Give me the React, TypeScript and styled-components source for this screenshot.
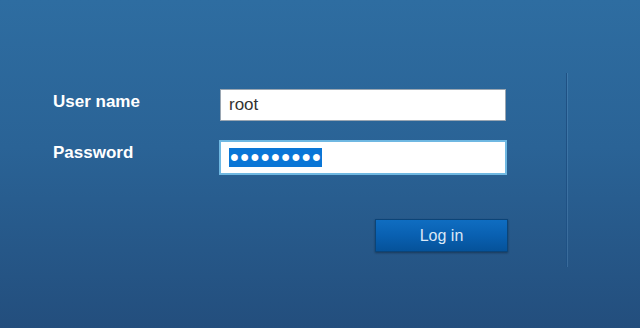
import React from 'react';
import styled, { createGlobalStyle } from 'styled-components';

const GlobalStyle = createGlobalStyle`
  html, body {
    margin: 0;
    padding: 0;
    width: 640px;
    height: 328px;
    overflow: hidden;
  }
  body {
    font-family: "Liberation Sans", Arial, sans-serif;
  }
`;

const App: React.FC = () => {
  return (
    <>
      <GlobalStyle />
      <Page>
        <FormArea>
          <Grid>
            <Label>User name</Label>
            <TextBox>root</TextBox>
            <Label>Password</Label>
            <TextBox focused>
              <Selected>•••••••••</Selected>
            </TextBox>
          </Grid>
          <ButtonRow>
            <LoginButton type="button">Log in</LoginButton>
          </ButtonRow>
        </FormArea>
        <Divider />
      </Page>
    </>
  );
};

export default App;

const Page = styled.div`
  display: flex;
  width: 640px;
  height: 328px;
  background: linear-gradient(to bottom, #2e6da1 0%, #2a6396 45%, #234e7d 100%);
  box-sizing: border-box;
`;

const FormArea = styled.div`
  width: 566px;
  padding: 89px 0 0 53px;
  box-sizing: border-box;
  display: flex;
  flex-direction: column;
`;

const Grid = styled.div`
  display: grid;
  grid-template-columns: 167px 286px;
  grid-template-rows: 32px 35px;
  row-gap: 19px;
  align-items: start;
`;

const Label = styled.div`
  padding-top: 3px;
  font-size: 17px;
  line-height: 20px;
  font-weight: bold;
  color: #ffffff;
`;

const TextBox = styled.div<{ focused?: boolean }>`
  display: flex;
  align-items: center;
  box-sizing: border-box;
  height: ${(p) => (p.focused ? '35px' : '32px')};
  width: ${(p) => (p.focused ? '288px' : '286px')};
  margin-left: ${(p) => (p.focused ? '-1px' : '0')};
  padding-left: 8px;
  background: #ffffff;
  border: ${(p) => (p.focused ? '2px solid #6fb8e2' : '1px solid #9aa6b2')};
  font-size: 17px;
  color: #333333;
`;

const Selected = styled.span`
  display: inline-flex;
  align-items: center;
  height: 19px;
  padding: 0 0 0 1px;
  background: #0a76d6;
  color: #ffffff;
  font-family: "Liberation Sans", Arial, sans-serif;
  font-size: 25px;
  line-height: 19px;
  letter-spacing: 1.5px;
`;

const ButtonRow = styled.div`
  display: flex;
  justify-content: flex-end;
  width: 455px;
  margin-top: 44px;
`;

const LoginButton = styled.button`
  width: 133px;
  height: 33px;
  box-sizing: border-box;
  border: 1px solid #0b4478;
  background: linear-gradient(to bottom, #0f6dc1 0%, #0960b1 50%, #05529a 100%);
  box-shadow: 0 1px 2px rgba(0, 0, 0, 0.35);
  color: #dbe8f6;
  font-family: "Liberation Sans", Arial, sans-serif;
  font-size: 16px;
  padding: 0;
  cursor: pointer;
`;

const Divider = styled.div`
  margin-top: 73px;
  width: 1px;
  height: 194px;
  background: #1f5184;
  box-shadow: 1px 0 0 rgba(120, 170, 215, 0.25);
`;
